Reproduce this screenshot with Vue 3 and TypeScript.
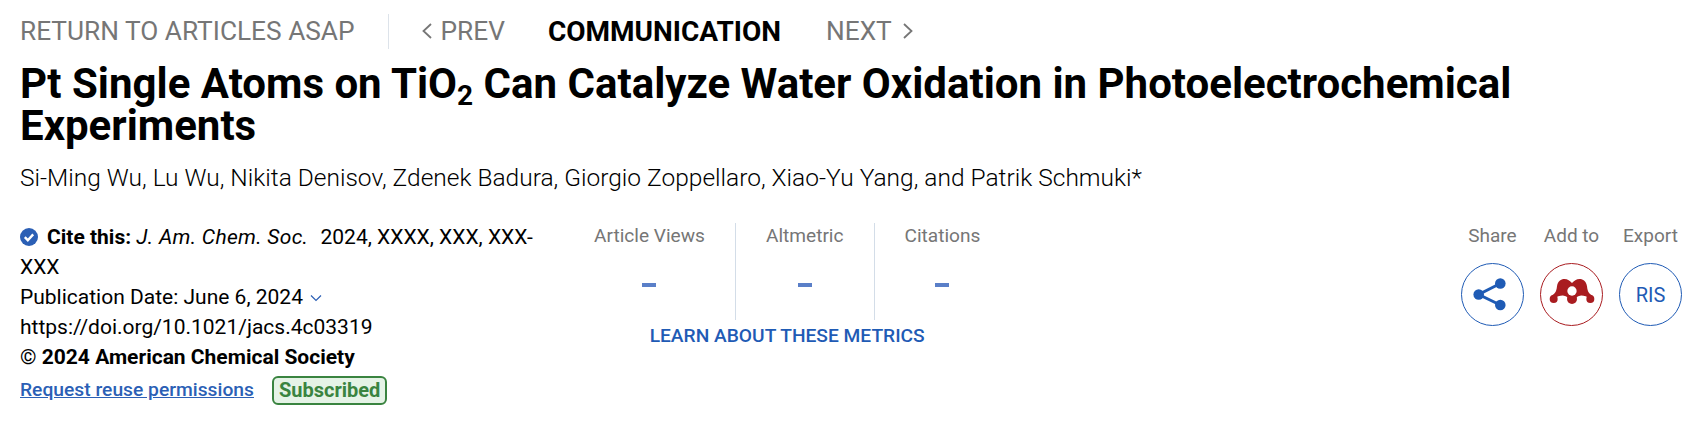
<script setup lang="ts">
const authors = 'Si-Ming Wu, Lu Wu, Nikita Denisov, Zdenek Badura, Giorgio Zoppellaro, Xiao-Yu Yang, and Patrik Schmuki*';
const metrics = ['Article Views', 'Altmetric', 'Citations'];
</script>

<template>
  <div class="page">
    <nav class="topnav">
      <a class="back">RETURN TO ARTICLES ASAP</a>
      <span class="nav-sep"></span>
      <a class="prev">
        <svg width="10" height="16" viewBox="0 0 10 16"><path d="M9 1 1.500 8 9 15" fill="none" stroke="#767676" stroke-width="1.800" /></svg>
        PREV
      </a>
      <span class="section">COMMUNICATION</span>
      <a class="next">
        NEXT
        <svg width="10" height="16" viewBox="0 0 10 16"><path d="M1 1 8.500 8 1 15" fill="none" stroke="#767676" stroke-width="1.800" /></svg>
      </a>
    </nav>

    <h1 class="title">Pt Single Atoms on TiO<sub>2</sub> Can Catalyze Water Oxidation in Photoelectrochemical Experiments</h1>
    <p class="authors">{{ authors }}</p>

    <div class="meta-row">
      <div class="cite">
        <div>
          <svg class="check" width="18" height="18" viewBox="0 0 18 18">
            <circle cx="9" cy="9" r="9" fill="#2b5fb5" />
            <path d="M4.800 9.200 7.800 12.200 13.200 6.400" fill="none" stroke="#fff" stroke-width="2.400" />
          </svg>
          <b>Cite this:</b> <i class="journal">J. Am. Chem. Soc.</i> 2024, XXXX, XXX, XXX-XXX
        </div>
        <div>
          Publication Date: June 6, 2024
          <svg class="caret" width="12" height="8" viewBox="0 0 12 8"><path d="M1 1.500 6 6.500 11 1.500" fill="none" stroke="#2b5fb5" stroke-width="1.200" /></svg>
        </div>
        <div>https://doi.org/10.1021/jacs.4c03319</div>
        <div>© <b>2024 American Chemical Society</b></div>
        <div class="perm-row">
          <a class="perm">Request reuse permissions</a>
          <span class="badge">Subscribed</span>
        </div>
      </div>

      <div class="metrics">
        <div class="metric-cols">
          <div v-for="m in metrics" :key="m" class="metric">
            <span class="metric-label">{{ m }}</span>
            <span class="metric-value"></span>
          </div>
        </div>
        <a class="learn">LEARN ABOUT THESE METRICS</a>
      </div>

      <div class="actions">
        <div class="action">
          <span class="action-label">Share</span>
          <span class="round">
            <svg width="61" height="61" viewBox="0 0 61 61">
              <path d="M38.300 19.500 16.700 30.500 38.300 41" fill="none" stroke="#1f5bb5" stroke-width="3" />
              <circle cx="38.300" cy="19.500" r="5.300" fill="#1f5bb5" />
              <circle cx="16.700" cy="30.500" r="5.300" fill="#1f5bb5" />
              <circle cx="38.300" cy="41" r="5.300" fill="#1f5bb5" />
            </svg>
          </span>
        </div>
        <div class="action">
          <span class="action-label">Add to</span>
          <span class="round red">
            <svg width="61" height="61" viewBox="0 0 183 183">
              <path d="M30 97C40 89 46 87 48 67 50 51 60 45 70 45 80 45 87 51 93 57 99 51 106 45 116 45 126 45 136 51 138 67 140 87 146 89 156 97L148 105C138 97 126 94 118 95 112 96 108 98 106 101L80 101C78 98 74 96 68 95 60 94 48 97 38 105Z" fill="#a91c20" />
              <circle cx="38" cy="105" r="12" fill="#a91c20" />
              <circle cx="93" cy="105" r="15" fill="#a91c20" />
              <circle cx="148" cy="105" r="12" fill="#a91c20" />
              <circle cx="93" cy="81" r="14" fill="#fff" />
            </svg>
          </span>
        </div>
        <div class="action">
          <span class="action-label">Export</span>
          <span class="round">RIS</span>
        </div>
      </div>
    </div>
  </div>
</template>

<style scoped>
.page {
  width: 1693px;
  height: 426px;
  box-sizing: border-box;
  padding: 12px 20px 0;
  font-family: Roboto, sans-serif;
  color: #000;
  overflow: hidden;
  background: #fff;
}

.topnav {
  display: flex;
  align-items: center;
  height: 38px;
  font-size: 26.250px;
  color: #767676;
}

.nav-sep {
  width: 1px;
  height: 35px;
  background: #dde3ea;
  margin: 0 33px 0 33px;
}

.prev, .next {
  display: flex;
  align-items: center;
  gap: 11px;
}

.prev {
  gap: 9px;
}

.section {
  font-size: 28px;
  font-weight: 700;
  color: #000;
  margin: 0 45px 0 43px;
}

.title {
  margin: 13px 0 0;
  font-size: 42px;
  line-height: 42px;
  font-weight: 700;
  width: 1600px;
}

.title sub {
  font-size: 28px;
  line-height: 0;
  vertical-align: -7px;
}

.authors {
  margin: 16px 0 0;
  font-size: 24.500px;
  line-height: 30px;
  font-weight: 300;
}

.meta-row {
  display: flex;
  margin-top: 30px;
}

.cite {
  width: 530px;
  margin-top: -1px;
  font-size: 21px;
  line-height: 30px;
}

.check {
  vertical-align: -2px;
  margin-right: 9px;
}

.journal {
  margin-right: 7px;
  letter-spacing: 0.300px;
}

.caret {
  vertical-align: 2px;
  margin-left: 2px;
}

.perm-row {
  display: flex;
  align-items: center;
  gap: 18px;
  margin-top: 3px;
}

.perm {
  color: #2b5fb5;
  font-size: 19.250px;
  font-weight: 500;
  text-decoration: underline;
}

.badge {
  font-size: 20px;
  line-height: 23px;
  font-weight: 700;
  color: #3a8440;
  background: #e5f3e6;
  border: 2px solid #3a8440;
  border-radius: 6px;
  padding: 1px 5px;
}

.metrics {
  margin-left: 14px;
}

.metric-cols {
  display: flex;
}

.metric {
  display: flex;
  flex-direction: column;
  align-items: center;
  height: 97px;
  padding: 0 30px;
  border-left: 1px solid #d3dde8;
  color: #767676;
  font-size: 19.100px;
  white-space: nowrap;
}

.metric:first-child {
  border-left: 0;
}

.metric-label {
  line-height: 26px;
}

.metric-value {
  width: 14px;
  height: 4px;
  background: #5a7fc8;
  margin-top: 34px;
}

.learn {
  display: block;
  margin-top: 2px;
  text-align: center;
  color: #1f5bb5;
  font-size: 19.200px;
  font-weight: 500;
  line-height: 28px;
}

.actions {
  display: flex;
  gap: 16px;
  margin-left: auto;
  margin-right: -9px;
}

.action {
  display: flex;
  flex-direction: column;
  align-items: center;
  gap: 14px;
}

.action-label {
  color: #767676;
  font-size: 19px;
  line-height: 26px;
}

.round {
  display: flex;
  align-items: center;
  justify-content: center;
  width: 63px;
  height: 63px;
  box-sizing: border-box;
  border: 1px solid #1f5bb5;
  border-radius: 50%;
  color: #1f5bb5;
  font-size: 20px;
}

.round.red {
  border-color: #a91c20;
}
</style>
